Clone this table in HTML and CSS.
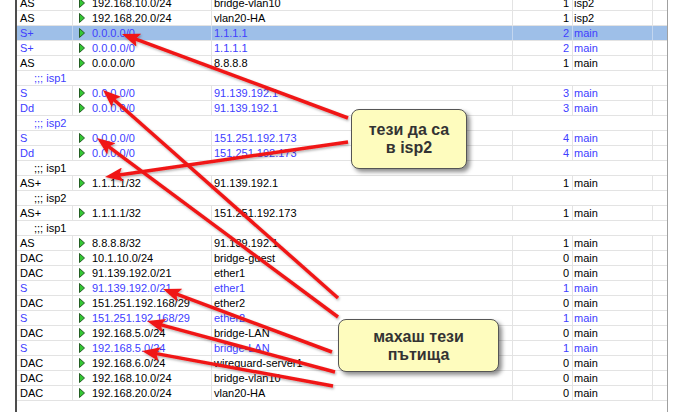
FILE: index.html
```html
<!DOCTYPE html>
<html>
<head>
<meta charset="utf-8">
<link rel="stylesheet" href="styles.css">
</head>
<body>
<svg class="defs" width="0" height="0">
  <defs>
    <symbol id="tri" viewBox="0 0 6 10">
      <polygon points="0.5,0.5 5.5,5 0.5,9.5" fill="#34c734" stroke="#235d23" stroke-width="1" stroke-linejoin="round"/>
    </symbol>
  </defs>
</svg>
<div class="list">
  <div class="row"><div class="c flags">AS</div><div class="c dst"><svg class="tri"><use href="#tri"/></svg>192.168.10.0/24</div><div class="c gw">bridge-vlan10</div><div class="c dist">1</div><div class="c tbl">isp2</div><div class="c end"></div></div>
  <div class="row"><div class="c flags">AS</div><div class="c dst"><svg class="tri"><use href="#tri"/></svg>192.168.20.0/24</div><div class="c gw">vlan20-HA</div><div class="c dist">1</div><div class="c tbl">isp2</div><div class="c end"></div></div>
  <div class="row blue sel"><div class="c flags">S+</div><div class="c dst"><svg class="tri"><use href="#tri"/></svg>0.0.0.0/0</div><div class="c gw">1.1.1.1</div><div class="c dist">2</div><div class="c tbl">main</div><div class="c end"></div></div>
  <div class="row blue"><div class="c flags">S+</div><div class="c dst"><svg class="tri"><use href="#tri"/></svg>0.0.0.0/0</div><div class="c gw">1.1.1.1</div><div class="c dist">2</div><div class="c tbl">main</div><div class="c end"></div></div>
  <div class="row"><div class="c flags">AS</div><div class="c dst"><svg class="tri"><use href="#tri"/></svg>0.0.0.0/0</div><div class="c gw">8.8.8.8</div><div class="c dist">1</div><div class="c tbl">main</div><div class="c end"></div></div>
  <div class="row cm blue">;;; isp1</div>
  <div class="row blue"><div class="c flags">S</div><div class="c dst"><svg class="tri"><use href="#tri"/></svg>0.0.0.0/0</div><div class="c gw">91.139.192.1</div><div class="c dist">3</div><div class="c tbl">main</div><div class="c end"></div></div>
  <div class="row blue"><div class="c flags">Dd</div><div class="c dst"><svg class="tri"><use href="#tri"/></svg>0.0.0.0/0</div><div class="c gw">91.139.192.1</div><div class="c dist">3</div><div class="c tbl">main</div><div class="c end"></div></div>
  <div class="row cm blue">;;; isp2</div>
  <div class="row blue"><div class="c flags">S</div><div class="c dst"><svg class="tri"><use href="#tri"/></svg>0.0.0.0/0</div><div class="c gw">151.251.192.173</div><div class="c dist">4</div><div class="c tbl">main</div><div class="c end"></div></div>
  <div class="row blue"><div class="c flags">Dd</div><div class="c dst"><svg class="tri"><use href="#tri"/></svg>0.0.0.0/0</div><div class="c gw">151.251.192.173</div><div class="c dist">4</div><div class="c tbl">main</div><div class="c end"></div></div>
  <div class="row cm">;;; isp1</div>
  <div class="row"><div class="c flags">AS+</div><div class="c dst"><svg class="tri"><use href="#tri"/></svg>1.1.1.1/32</div><div class="c gw">91.139.192.1</div><div class="c dist">1</div><div class="c tbl">main</div><div class="c end"></div></div>
  <div class="row cm">;;; isp2</div>
  <div class="row"><div class="c flags">AS+</div><div class="c dst"><svg class="tri"><use href="#tri"/></svg>1.1.1.1/32</div><div class="c gw">151.251.192.173</div><div class="c dist">1</div><div class="c tbl">main</div><div class="c end"></div></div>
  <div class="row cm">;;; isp1</div>
  <div class="row"><div class="c flags">AS</div><div class="c dst"><svg class="tri"><use href="#tri"/></svg>8.8.8.8/32</div><div class="c gw">91.139.192.1</div><div class="c dist">1</div><div class="c tbl">main</div><div class="c end"></div></div>
  <div class="row"><div class="c flags">DAC</div><div class="c dst"><svg class="tri"><use href="#tri"/></svg>10.1.10.0/24</div><div class="c gw">bridge-guest</div><div class="c dist">0</div><div class="c tbl">main</div><div class="c end"></div></div>
  <div class="row"><div class="c flags">DAC</div><div class="c dst"><svg class="tri"><use href="#tri"/></svg>91.139.192.0/21</div><div class="c gw">ether1</div><div class="c dist">0</div><div class="c tbl">main</div><div class="c end"></div></div>
  <div class="row blue"><div class="c flags">S</div><div class="c dst"><svg class="tri"><use href="#tri"/></svg>91.139.192.0/21</div><div class="c gw">ether1</div><div class="c dist">1</div><div class="c tbl">main</div><div class="c end"></div></div>
  <div class="row"><div class="c flags">DAC</div><div class="c dst"><svg class="tri"><use href="#tri"/></svg>151.251.192.168/29</div><div class="c gw">ether2</div><div class="c dist">0</div><div class="c tbl">main</div><div class="c end"></div></div>
  <div class="row blue"><div class="c flags">S</div><div class="c dst"><svg class="tri"><use href="#tri"/></svg>151.251.192.168/29</div><div class="c gw">ether2</div><div class="c dist">1</div><div class="c tbl">main</div><div class="c end"></div></div>
  <div class="row"><div class="c flags">DAC</div><div class="c dst"><svg class="tri"><use href="#tri"/></svg>192.168.5.0/24</div><div class="c gw">bridge-LAN</div><div class="c dist">0</div><div class="c tbl">main</div><div class="c end"></div></div>
  <div class="row blue"><div class="c flags">S</div><div class="c dst"><svg class="tri"><use href="#tri"/></svg>192.168.5.0/24</div><div class="c gw">bridge-LAN</div><div class="c dist">1</div><div class="c tbl">main</div><div class="c end"></div></div>
  <div class="row"><div class="c flags">DAC</div><div class="c dst"><svg class="tri"><use href="#tri"/></svg>192.168.6.0/24</div><div class="c gw">wireguard-server1</div><div class="c dist">0</div><div class="c tbl">main</div><div class="c end"></div></div>
  <div class="row"><div class="c flags">DAC</div><div class="c dst"><svg class="tri"><use href="#tri"/></svg>192.168.10.0/24</div><div class="c gw">bridge-vlan10</div><div class="c dist">0</div><div class="c tbl">main</div><div class="c end"></div></div>
  <div class="row"><div class="c flags">DAC</div><div class="c dst"><svg class="tri"><use href="#tri"/></svg>192.168.20.0/24</div><div class="c gw">vlan20-HA</div><div class="c dist">0</div><div class="c tbl">main</div><div class="c end"></div></div>
</div>

<svg class="arrows" width="693" height="412" viewBox="0 0 693 412">
  <defs>
    <marker id="head" viewBox="0 0 18 14" refX="9" refY="7" markerWidth="18" markerHeight="14" markerUnits="userSpaceOnUse" orient="auto">
      <path d="M0,0 L18,7 L0,14 L3.5,7 Z" fill="#f01818"/>
    </marker>
    <filter id="sh" x="-10%" y="-10%" width="120%" height="120%">
      <feDropShadow dx="1" dy="1.5" stdDeviation="0.8" flood-color="#000" flood-opacity="0.3"/>
    </filter>
  </defs>
  <g stroke="#f01818" stroke-width="3.5" fill="none" marker-end="url(#head)" filter="url(#sh)">
    <line x1="348" y1="118" x2="130.4" y2="37.1"/>
    <line x1="338" y1="298" x2="109.7" y2="96"/>
    <line x1="338" y1="317" x2="104.2" y2="143.4"/>
    <line x1="348" y1="142" x2="113.9" y2="175.7"/>
    <line x1="332" y1="352" x2="171.4" y2="292.1"/>
    <line x1="335" y1="372" x2="155.7" y2="323.4"/>
    <line x1="333" y1="386" x2="150.9" y2="352.6"/>
  </g>
</svg>

<div class="callout c1"><span>тези да са</span><span>в isp2</span></div>
<div class="callout c2"><span>махаш тези</span><span>пътища</span></div>
</body>
</html>
```

FILE: styles.css
```css
* { box-sizing: border-box; }
html, body { margin: 0; padding: 0; background: #fff; }
body {
  width: 693px;
  height: 412px;
  overflow: hidden;
  position: relative;
  font-family: "Liberation Sans", Arial, sans-serif;
  font-size: 11px;
}
.defs { position: absolute; width: 0; height: 0; }

.list {
  margin: -4px 0 0 15px;
  width: 653px;
  height: 420px;
  border-left: 2px solid #4d4d4d;
  border-right: 1px solid #a0a0a0;
}
.row {
  display: grid;
  grid-template-columns: 56px 139px 301px 60px 80px 14px;
  height: 15px;
  border-bottom: 1px solid #e3e3e3;
  line-height: 14px;
  color: #000;
  white-space: nowrap;
}
.row.blue { color: #4040ff; }
.row.sel { background: #9ebfe8; }
.row.sel .c { border-right-color: #c3d6ef; }
.row.cm { display: block; padding-left: 17px; }

.c { border-right: 1px solid #e3e3e3; overflow: hidden; }
.c.end { border-right: none; }
.flags { padding-left: 3px; }
.dst { display: flex; align-items: center; padding-left: 6px; }
.tri { width: 6px; height: 10px; margin-right: 7px; flex: none; }
.gw { padding-left: 2px; }
.dist { text-align: right; padding-right: 3px; }
.tbl { padding-left: 1px; }

.arrows {
  position: absolute;
  left: 0;
  top: 0;
  pointer-events: none;
}

.callout {
  position: absolute;
  display: flex;
  flex-direction: column;
  align-items: center;
  justify-content: center;
  background: #fefcbe;
  border: 1px solid #555;
  border-radius: 8px;
  box-shadow: 3px 3px 4px rgba(0, 0, 0, 0.45);
  font-family: "Liberation Sans", Arial, sans-serif;
  font-weight: bold;
  font-size: 16px;
  line-height: 18px;
  color: #333;
}
.c1 { left: 351px; top: 109px; width: 116px; height: 60px; }
.c2 { left: 338px; top: 319px; width: 161px; height: 53px; }
```
